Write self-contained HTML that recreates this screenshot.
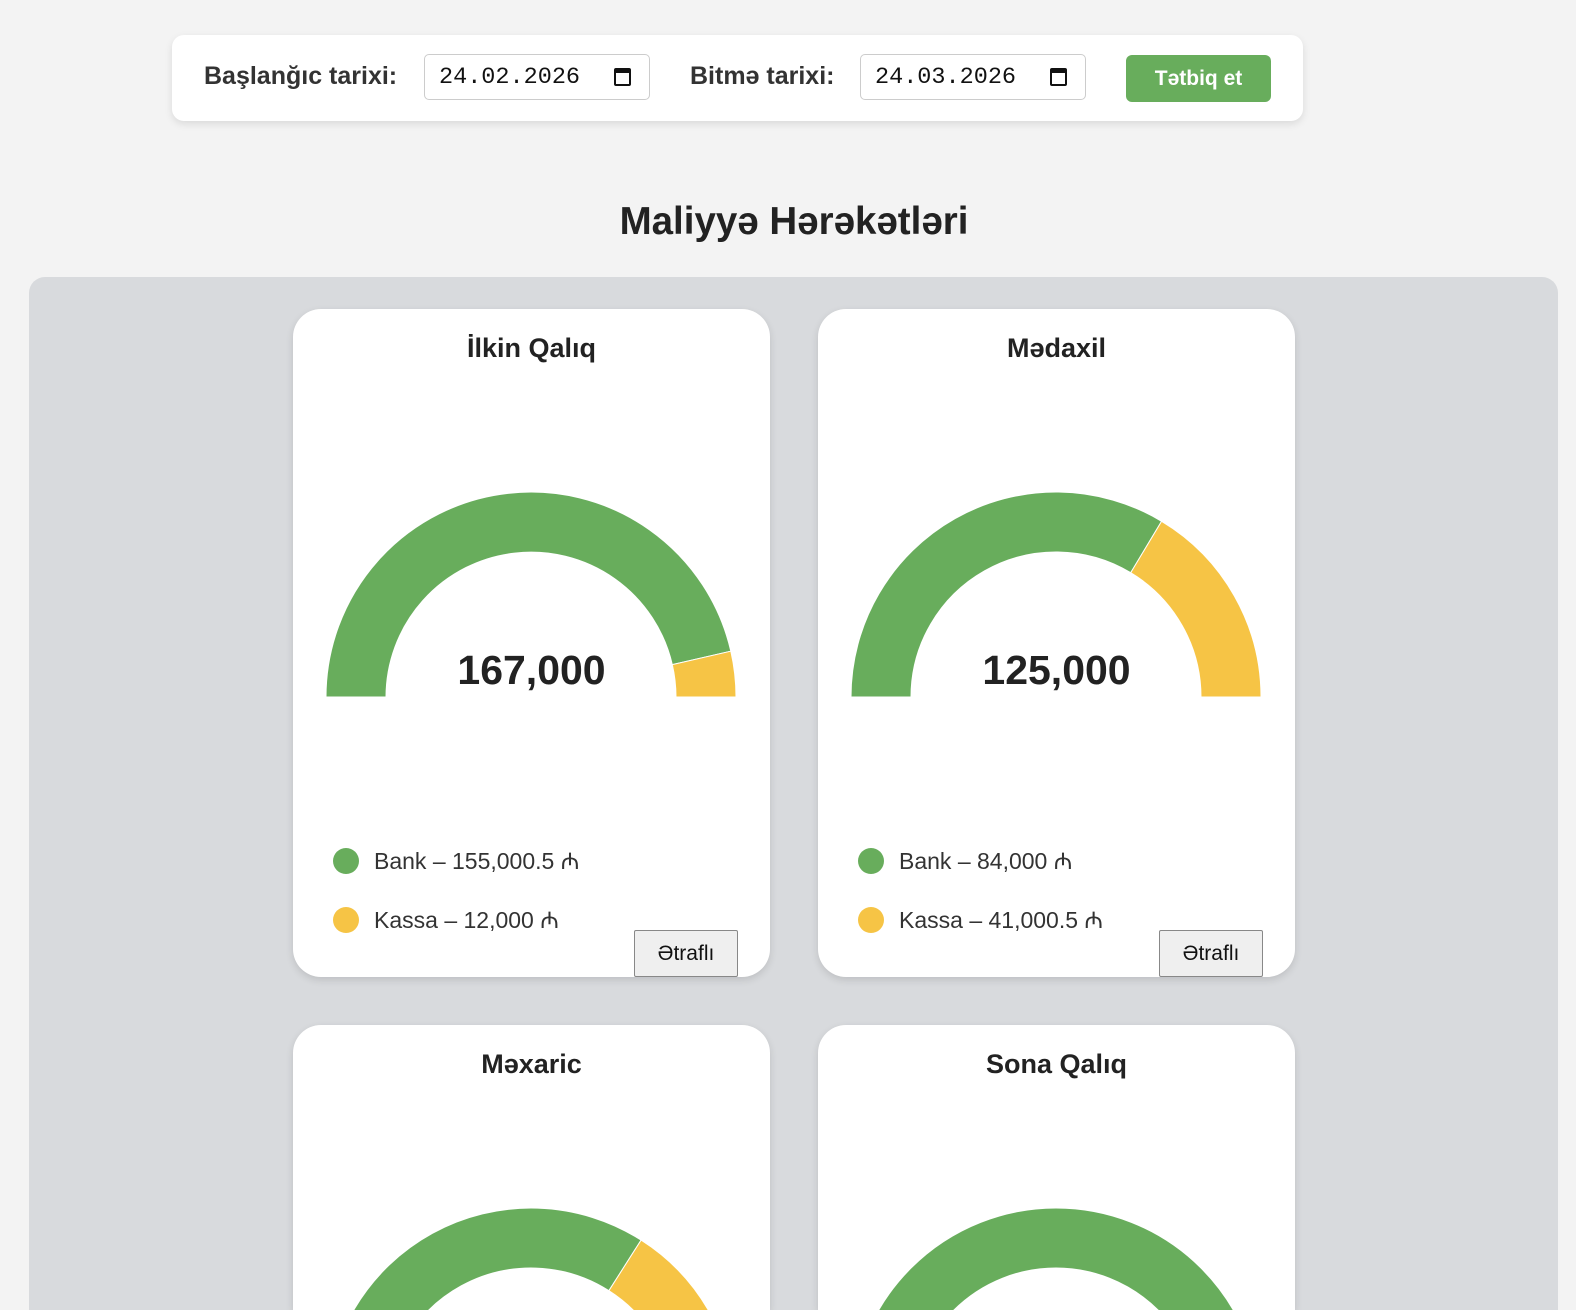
<!DOCTYPE html>
<html style="height:1310px;overflow:hidden"><head><meta charset="utf-8"><style>
body{margin:0;width:1576px;height:1310px;overflow:hidden;background:#f3f3f3;font-family:"Liberation Sans",Arial,sans-serif;position:relative;color:#222}
.abs{position:absolute}
.bar{left:172px;top:35px;width:1131px;height:86px;background:#fff;border-radius:12px;box-shadow:0 3px 8px rgba(0,0,0,.1)}
.lbl{font-weight:bold;font-size:25px;color:#333;top:62px}
.inp{top:54px;width:226px;height:46px;box-sizing:border-box;border:1px solid #ccc;border-radius:5px;background:#fff;font-family:"Liberation Mono",monospace;font-size:23.5px;line-height:46px;padding-left:14px;color:#111}
.cal{position:absolute;right:18px;top:13px;width:17px;height:18px;border:2px solid #111;border-top-width:5px;border-radius:2px;box-sizing:border-box}
.btn{left:1126px;top:55px;width:145px;height:47px;background:#68ad5c;border-radius:6px;color:#fff;font-weight:bold;font-size:21px;text-align:center;line-height:47px}
h1{position:absolute;left:0;width:1576px;box-sizing:border-box;padding-left:12px;top:200px;margin:0;text-align:center;font-size:38.5px;font-weight:bold;color:#222}
.panel{left:29px;top:277px;width:1529px;height:1033px;background:#d8dadd;border-radius:16px 16px 0 0}
.card{width:477px;height:668px;background:#fff;border-radius:28px;box-shadow:0 3px 8px rgba(0,0,0,.12);overflow:hidden}
.ct{position:absolute;left:0;width:100%;top:24px;text-align:center;font-weight:bold;font-size:27px;color:#222}
.num{position:absolute;left:0;width:100%;top:338px;text-align:center;font-weight:bold;font-size:41px;color:#222}
.leg{position:absolute;left:40px;font-size:23px;color:#333}
.dot{display:inline-block;width:26px;height:26px;border-radius:50%;vertical-align:-5px;margin-right:15px}
.more{position:absolute;left:341px;top:621px;width:104px;height:47px;box-sizing:border-box;border:1px solid #888;background:#efefef;font-size:21px;text-align:center;line-height:45px;color:#111;border-radius:2px}
</style></head><body>
<div class="abs bar"></div>
<div class="abs lbl" style="left:204px">Başlanğıc tarixi:</div>
<div class="abs inp" style="left:424px">24.02.2026<span class="cal"></span></div>
<div class="abs lbl" style="left:690px">Bitmə tarixi:</div>
<div class="abs inp" style="left:860px">24.03.2026<span class="cal"></span></div>
<div class="abs btn">Tətbiq et</div>
<h1>Maliyyə Hərəkətləri</h1>
<div class="abs panel"></div>

<div class="abs card" style="left:293px;top:309px">
<div class="ct">İlkin Qalıq</div><div class="num">167,000</div>
<div class="leg" style="top:535px"><span class="dot" style="background:#68ad5c"></span>Bank – 155,000.5 ₼</div>
<div class="leg" style="top:594px"><span class="dot" style="background:#f6c445"></span>Kassa – 12,000 ₼</div>
<div class="more">Ətraflı</div></div>

<div class="abs card" style="left:818px;top:309px">
<div class="ct">Mədaxil</div><div class="num">125,000</div>
<div class="leg" style="top:535px"><span class="dot" style="background:#68ad5c"></span>Bank – 84,000 ₼</div>
<div class="leg" style="top:594px"><span class="dot" style="background:#f6c445"></span>Kassa – 41,000.5 ₼</div>
<div class="more">Ətraflı</div></div>

<div class="abs card" style="left:293px;top:1025px;height:285px;border-radius:28px 28px 0 0"><div class="ct">Məxaric</div></div>
<div class="abs card" style="left:818px;top:1025px;height:285px;border-radius:28px 28px 0 0"><div class="ct">Sona Qalıq</div></div>

<svg class="abs" style="left:0;top:0" width="1576" height="1310" stroke="#fff" stroke-width="1">
<path fill="#68ad5c" d="M326,697 A205,205 0 0 1 730.8,651.2 L672.3,664.6 A145,145 0 0 0 386,697 Z"/>
<path fill="#f6c445" d="M730.8,651.2 A205,205 0 0 1 736,697 L676,697 A145,145 0 0 0 672.3,664.6 Z"/>
<path fill="#68ad5c" d="M851,697 A205,205 0 0 1 1161.6,521.3 L1130.7,572.7 A145,145 0 0 0 911,697 Z"/>
<path fill="#f6c445" d="M1161.6,521.3 A205,205 0 0 1 1261,697 L1201,697 A145,145 0 0 0 1130.7,572.7 Z"/>
<path fill="#68ad5c" d="M326,1413 A205,205 0 0 1 641.1,1240.1 L608.9,1290.7 A145,145 0 0 0 386,1413 Z"/>
<path fill="#f6c445" d="M641.1,1240.1 A205,205 0 0 1 736,1413 L676,1413 A145,145 0 0 0 608.9,1290.7 Z"/>
<path fill="#68ad5c" d="M851,1413 A205,205 0 0 1 1261,1413 L1201,1413 A145,145 0 0 0 911,1413 Z"/>
</svg>
</body></html>
